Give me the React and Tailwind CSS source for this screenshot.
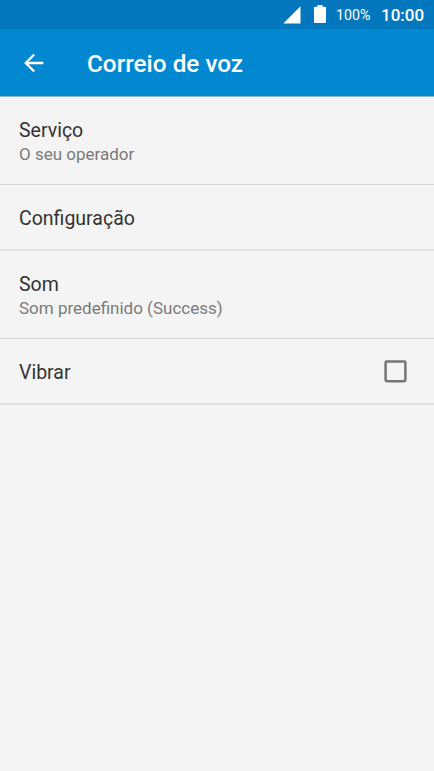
const settings = [
  { title: 'Serviço', summary: 'O seu operador', divider: 'pb-[18px] border-b border-[#d6d6d6]' },
  { title: 'Configuração', divider: 'pb-[17px] border-b-2 border-[#e1e1e1]' },
  { title: 'Som', summary: 'Som predefinido (Success)', divider: 'pb-[18px] border-b border-[#d6d6d6]' },
  { title: 'Vibrar', checkbox: true, divider: 'pb-[17px] border-b-2 border-[#dfdfdf]' },
];

function StatusBar() {
  return (
    <div className="h-[29px] bg-[#0277bd] flex items-center justify-end pr-[10px] text-white">
      <svg className="w-[18px] h-[18px]" viewBox="0 0 18 18" fill="currentColor">
        <path d="M0.3 17.5 17.5 0.3V17.5z" />
      </svg>
      <svg className="w-3 h-[18px] ml-[13px] -mt-px" viewBox="0 0 12 18" fill="currentColor">
        <path d="M3.5 0h5v1.8H11a1 1 0 0 1 1 1V17a1 1 0 0 1-1 1H1a1 1 0 0 1-1-1V2.8a1 1 0 0 1 1-1h2.5z" />
      </svg>
      <span className="ml-[10px] pt-px w-[36px] text-[14.2px] leading-[18px] whitespace-nowrap">100%</span>
      <span className="ml-[9px] w-[43px] text-[17px] leading-[18px] font-medium whitespace-nowrap">10:00</span>
    </div>
  );
}

function Header() {
  return (
    <header className="h-[68px] bg-[#0288d1] border-b border-[#8bb4cf] flex items-center text-white">
      <button className="ml-5 w-7 h-7" aria-label="Voltar">
        <svg className="w-7 h-7" viewBox="0 0 24 24" fill="currentColor">
          <path d="M20 11H7.33l5.59-5.59L11.5 4l-8 8 8 8 1.41-1.41L7.33 13H20v-2z" />
        </svg>
      </button>
      <h1 className="ml-[39px] pt-[2px] text-[24.3px] leading-7 font-medium">Correio de voz</h1>
    </header>
  );
}

function SettingRow({ item }) {
  return (
    <li className={`px-[19px] pt-5 flex items-center justify-between ${item.divider}`}>
      <div>
        <p className="text-[19.5px] leading-[27px] text-[#333333]">{item.title}</p>
        {item.summary && (
          <p className="-mt-px mb-px text-[17px] leading-[22px] text-[#7b7b7b]">{item.summary}</p>
        )}
      </div>
      {item.checkbox && (
        <svg
          role="checkbox"
          aria-checked="false"
          className="mr-2 w-[23px] h-[23px] -mt-[2px] text-[#757575]"
          viewBox="0 0 23 23"
          fill="none"
          stroke="currentColor"
          strokeWidth="2.5"
        >
          <rect x="1.6" y="1.4" width="19.8" height="19.8" rx="1.2" />
        </svg>
      )}
    </li>
  );
}

export default function App() {
  return (
    <div className="w-full h-screen overflow-hidden bg-[#f4f4f4] font-[Roboto,sans-serif]">
      <StatusBar />
      <Header />
      <ul>
        {settings.map((item) => (
          <SettingRow key={item.title} item={item} />
        ))}
      </ul>
    </div>
  );
}
